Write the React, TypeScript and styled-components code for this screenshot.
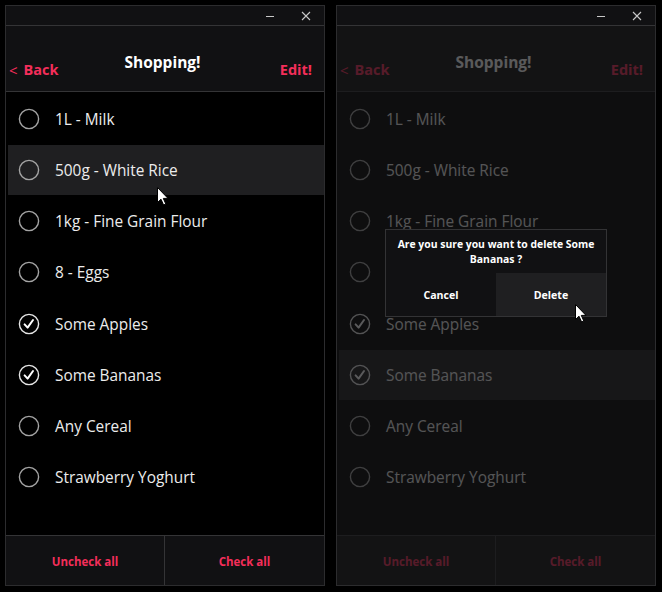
import React from "react";
import styled, { createGlobalStyle, css } from "styled-components";

const PINK = "#f42e5a";

const GlobalStyle = createGlobalStyle`
  html, body { margin: 0; padding: 0; background: #000; }
  body { font-family: "Open Sans", "Noto Sans", sans-serif; -webkit-font-smoothing: antialiased; }
  * { box-sizing: border-box; }
`;

const Page = styled.div`
  display: flex;
  gap: 11px;
  padding: 5px 6px 6px 5px;
  width: 662px;
  height: 592px;
  background: #000;
`;

const Window = styled.div`
  width: 320px;
  height: 581px;
  border: 1px solid #2c2c2e;
  display: flex;
  flex-direction: column;
  background: #000;
`;

const TitleBar = styled.div`
  height: 20px;
  flex: none;
  background: #111113;
  border-bottom: 1px solid #343436;
  display: flex;
  justify-content: flex-end;
`;

const CaptionButton = styled.div`
  width: 36px;
  height: 19px;
  display: flex;
  align-items: center;
  justify-content: center;
  color: #c8c8c8;
`;

const Body = styled.div`
  position: relative;
  flex: 1;
  display: flex;
  flex-direction: column;
  min-height: 0;
`;

const Header = styled.div`
  height: 66px;
  flex: none;
  background: #111113;
  border-bottom: 1px solid #343436;
  display: grid;
  grid-template-columns: 1fr auto 1fr;
  align-items: end;
  padding: 0 12px 0 3px;
`;

const NavButton = styled.div<{ $right?: boolean }>`
  color: ${PINK};
  font-weight: 700;
  font-size: 14.5px;
  line-height: 20px;
  padding-bottom: 11px;
  justify-self: ${(p) => (p.$right ? "end" : "start")};
  display: flex;
  align-items: center;
  gap: 6px;
`;

const Chevron = styled.span`
  font-weight: 400;
  font-size: 15px;
`;

const Title = styled.div`
  color: #fff;
  font-weight: 700;
  font-size: 15.5px;
  line-height: 20px;
  padding-bottom: 19px;
  transform: translateX(2px);
`;

const List = styled.div`
  flex: 1;
  background: #000;
  padding: 2px 0 0 2px;
  display: flex;
  flex-direction: column;
  gap: 1.15px;
`;

const Row = styled.div<{ $active?: boolean }>`
  height: 50px;
  flex: none;
  display: flex;
  align-items: center;
  padding-left: 10px;
  gap: 15px;
  background: ${(p) => (p.$active ? "#1f1f21" : "transparent")};
`;

const ItemText = styled.span`
  color: #ececec;
  font-size: 15.4px;
  line-height: 20px;
  margin-top: 2px;
`;

const Footer = styled.div`
  height: 50px;
  flex: none;
  border-top: 1px solid #343436;
  background: #111113;
  display: grid;
  grid-template-columns: 1fr 1fr;
`;

const FooterButton = styled.div<{ $divider?: boolean }>`
  display: flex;
  align-items: center;
  justify-content: center;
  color: ${PINK};
  font-weight: 700;
  font-size: 11.5px;
  padding-top: 2px;
  ${(p) =>
    p.$divider &&
    css`
      border-right: 1px solid #343436;
    `}
`;

const Overlay = styled.div`
  position: absolute;
  inset: 0;
  background: rgba(20, 20, 22, 0.7);
`;

const Dialog = styled.div`
  position: absolute;
  top: 203px;
  left: 48px;
  width: 222px;
  background: #111113;
  border: 1px solid #333335;
  display: flex;
  flex-direction: column;
`;

const DialogText = styled.div`
  color: #fff;
  font-weight: 700;
  font-size: 10.4px;
  line-height: 15px;
  text-align: center;
  white-space: nowrap;
  padding: 7px 0 0;
  height: 43px;
`;

const DialogButtons = styled.div`
  display: grid;
  grid-template-columns: 1fr 1fr;
  height: 43px;
`;

const DialogButton = styled.div<{ $hover?: boolean }>`
  display: flex;
  align-items: center;
  justify-content: center;
  color: #fff;
  font-weight: 700;
  font-size: 10.6px;
  background: ${(p) => (p.$hover ? "#1f1f21" : "transparent")};
`;

const Cursor = styled.svg<{ $x: number; $y: number }>`
  position: absolute;
  left: ${(p) => p.$x}px;
  top: ${(p) => p.$y}px;
  width: 12px;
  height: 19px;
  z-index: 5;
`;

const CheckCircle = ({ checked }: { checked: boolean }) => (
  <svg width="22" height="22" viewBox="0 0 22 22">
    <circle
      cx="11"
      cy="11"
      r="9.6"
      fill="none"
      stroke={checked ? "#e6e6e6" : "#a4a4a4"}
      strokeWidth="1.4"
    />
    {checked && (
      <path
        d="M6.6 11.4 L9.6 14.6 L15 7"
        fill="none"
        stroke="#fff"
        strokeWidth="2"
        strokeLinecap="round"
        strokeLinejoin="round"
      />
    )}
  </svg>
);

const ArrowCursor = ({ x, y }: { x: number; y: number }) => (
  <Cursor $x={x} $y={y} viewBox="0 0 12 19">
    <path
      d="M0.5 0.5 L0.5 15.5 L4 12.2 L6.6 18 L8.8 17 L6.3 11.4 L11 11.4 Z"
      fill="#fff"
      stroke="#000"
      strokeWidth="1"
      strokeLinejoin="round"
    />
  </Cursor>
);

const items = [
  { name: "1L - Milk", checked: false },
  { name: "500g - White Rice", checked: false },
  { name: "1kg - Fine Grain Flour", checked: false },
  { name: "8 - Eggs", checked: false },
  { name: "Some Apples", checked: true },
  { name: "Some Bananas", checked: true },
  { name: "Any Cereal", checked: false },
  { name: "Strawberry Yoghurt", checked: false },
];

const Caption = () => (
  <TitleBar>
    <CaptionButton>
      <svg width="10" height="10" viewBox="0 0 10 10">
        <line x1="1" y1="5.5" x2="9" y2="5.5" stroke="#c8c8c8" strokeWidth="1" />
      </svg>
    </CaptionButton>
    <CaptionButton>
      <svg width="10" height="10" viewBox="0 0 10 10">
        <path d="M1 1 L9 9 M9 1 L1 9" stroke="#c8c8c8" strokeWidth="1.1" />
      </svg>
    </CaptionButton>
  </TitleBar>
);

const ShoppingWindow = ({
  activeIndex,
  dialog,
  cursor,
}: {
  activeIndex: number;
  dialog?: boolean;
  cursor: { x: number; y: number };
}) => (
  <Window>
    <Caption />
    <Body>
      <Header>
        <NavButton>
          <Chevron>&lt;</Chevron>
          <span>Back</span>
        </NavButton>
        <Title>Shopping!</Title>
        <NavButton $right>Edit!</NavButton>
      </Header>
      <List>
        {items.map((it, i) => (
          <Row key={it.name} $active={i === activeIndex}>
            <CheckCircle checked={it.checked} />
            <ItemText>{it.name}</ItemText>
          </Row>
        ))}
      </List>
      <Footer>
        <FooterButton $divider>Uncheck all</FooterButton>
        <FooterButton>Check all</FooterButton>
      </Footer>
      {dialog && (
        <>
          <Overlay />
          <Dialog>
            <DialogText>
              Are you sure you want to delete Some
              <br />
              Bananas ?
            </DialogText>
            <DialogButtons>
              <DialogButton>Cancel</DialogButton>
              <DialogButton $hover>Delete</DialogButton>
            </DialogButtons>
          </Dialog>
        </>
      )}
      <ArrowCursor x={cursor.x} y={cursor.y} />
    </Body>
  </Window>
);

export default function App() {
  return (
    <>
      <GlobalStyle />
      <Page>
        <ShoppingWindow activeIndex={1} cursor={{ x: 151, y: 161 }} />
        <ShoppingWindow activeIndex={5} dialog cursor={{ x: 238, y: 278 }} />
      </Page>
    </>
  );
}
